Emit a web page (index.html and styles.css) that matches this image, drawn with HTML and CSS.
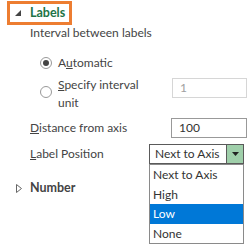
FILE: index.html
```html
<!DOCTYPE html>
<html lang="en">
  <head>
    <meta charset="utf-8" />
    <meta name="viewport" content="width=device-width" />
    <title>Axis labels</title>
    <link rel="stylesheet" href="styles.css">
  </head>

  <body>
    <section class="pane">
      <header class="group-head open">
        <svg class="caret" width="6" height="6" viewBox="0 0 6 6"><polygon points="6,0 6,6 0,6" fill="#444"/></svg>
        <span class="group-title">Labels</span>
      </header>

      <div class="text-row">Interval between labels</div>

      <div class="radio-row auto">
        <span class="radio checked"></span>
        <span>A<u>u</u>tomatic</span>
      </div>

      <div class="radio-row specify">
        <span class="radio"></span>
        <span class="radio-text"><u>S</u>pecify interval<br>unit</span>
        <div class="box disabled">1</div>
      </div>

      <div class="field-row">
        <span><u>D</u>istance from axis</span>
        <div class="box">100</div>
      </div>

      <div class="field-row">
        <span><u>L</u>abel Position</span>
        <div class="select">
          <span class="select-value">Next to Axis</span>
          <span class="select-btn"><svg width="7" height="4" viewBox="0 0 7 4"><polygon points="0,0 7,0 3.5,4" fill="#222"/></svg></span>
          <ul class="options">
            <li>Next to Axis</li>
            <li>High</li>
            <li class="active">Low</li>
            <li>None</li>
          </ul>
        </div>
      </div>

      <header class="group-head closed">
        <svg class="caret" width="6" height="9" viewBox="0 0 6 9"><polygon points="0.5,0.5 5.5,4.5 0.5,8.5" fill="none" stroke="#666" stroke-width="1"/></svg>
        <span class="group-title">Number</span>
      </header>
    </section>
  </body>
</html>
```

FILE: styles.css
```css
html {
  box-sizing: border-box;
}

* {
  box-sizing: inherit;
}

body {
  margin: 0;
  background: #fff;
  color: #444;
  font: 12px / 16px Lato, "Noto Sans", sans-serif;
}

.pane {
  padding-top: 1px;
  width: 247px;
  height: 245px;
}

.group-head {
  display: flex;
  align-items: center;
  height: 24px;
}

.group-head.open {
  margin-left: 7px;
  width: 65px;
  border: 3px solid #ed7d31;
  padding-left: 5px;
}

.group-head.closed {
  margin-top: 12px;
  padding-left: 16px;
}

.caret {
  flex: none;
}

.group-head.open .group-title {
  margin-left: 9px;
  color: #217346;
}

.group-head.closed .group-title {
  margin-left: 8px;
}

.group-title {
  font-weight: bold;
  font-size: 12.5px;
}

.text-row {
  padding-left: 30px;
  height: 16px;
}

.radio-row {
  display: flex;
  align-items: center;
  padding-left: 40px;
}

.radio-row.auto {
  margin-top: 14px;
  height: 16px;
}

.radio-row.specify {
  margin-top: 5px;
  align-items: flex-start;
}

.radio {
  flex: none;
  width: 12px;
  height: 12px;
  border: 1px solid #999;
  border-radius: 50%;
  margin-right: 6px;
  display: flex;
  align-items: center;
  justify-content: center;
}

.radio.checked::after {
  content: "";
  width: 6px;
  height: 6px;
  border-radius: 50%;
  background: #444;
}

.radio-row.specify .radio {
  margin-top: 10px;
}

.radio-text {
  line-height: 18px;
  flex: 1;
}

.box {
  flex: none;
  width: 75px;
  height: 20px;
  border: 1px solid #999;
  padding-left: 7px;
  line-height: 18px;
  color: #333;
}

.box.disabled {
  border-color: #d6d6d6;
  color: #a0a0a0;
  margin-top: 2px;
}

.field-row {
  display: flex;
  align-items: center;
  justify-content: space-between;
  padding-left: 30px;
  margin-top: 6px;
  height: 20px;
}

.field-row .box {
  width: 76px;
}

.select {
  position: relative;
  flex: none;
  width: 95px;
  height: 20px;
  margin-right: 3px;
  border: 1px solid #5a5a5a;
  display: flex;
  align-items: center;
  color: #333;
}

.select-value {
  flex: 1;
  padding-left: 5px;
}

.select-btn {
  width: 17px;
  height: 18px;
  background: #9fcfaa;
  border-left: 1px solid #5a5a5a;
  display: flex;
  align-items: center;
  justify-content: center;
}

.options {
  position: absolute;
  z-index: 2;
  left: -1px;
  top: 19px;
  width: 95px;
  margin: 0;
  padding: 0;
  list-style: none;
  background: #fff;
  border: 1px solid #8a8a8a;
}

.options li {
  height: 19.5px;
  line-height: 19.5px;
  padding-left: 3px;
}

.options li.active {
  background: #0078d7;
  color: #fff;
}
```
